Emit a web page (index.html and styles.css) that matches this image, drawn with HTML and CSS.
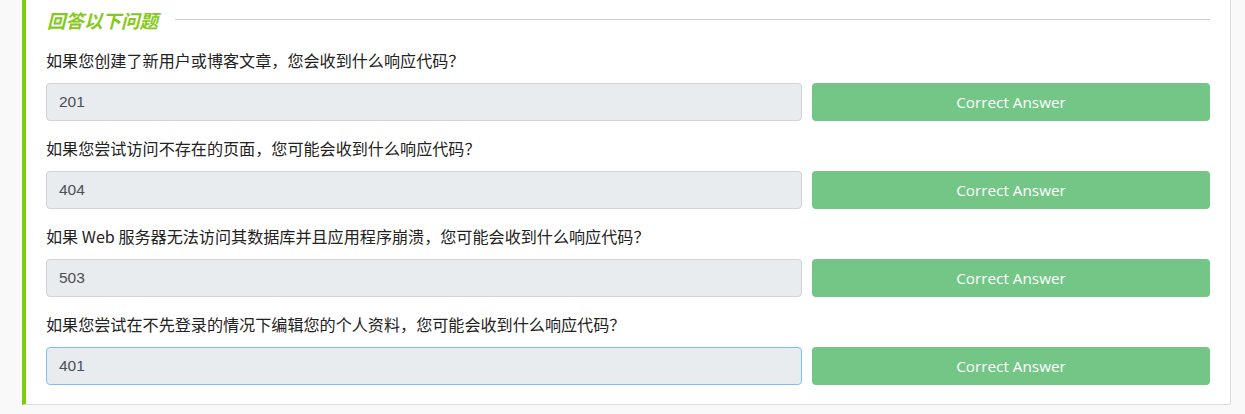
FILE: index.html
```html
<!DOCTYPE html>
<html lang="zh">
<head>
<meta charset="utf-8">
<link rel="stylesheet" href="styles.css">
</head>
<body>
<div class="card">
  <div class="heading">
    <span class="heading-title">回答以下问题</span>
    <span class="heading-rule"></span>
  </div>
  <div class="question">
    <div class="label">如果您创建了新用户或博客文章，您会收到什么响应代码？</div>
    <div class="row">
      <input class="answer" type="text" value="201" readonly>
      <button class="btn">Correct Answer</button>
    </div>
  </div>
  <div class="question">
    <div class="label">如果您尝试访问不存在的页面，您可能会收到什么响应代码？</div>
    <div class="row">
      <input class="answer" type="text" value="404" readonly>
      <button class="btn">Correct Answer</button>
    </div>
  </div>
  <div class="question">
    <div class="label">如果 Web 服务器无法访问其数据库并且应用程序崩溃，您可能会收到什么响应代码？</div>
    <div class="row">
      <input class="answer" type="text" value="503" readonly>
      <button class="btn">Correct Answer</button>
    </div>
  </div>
  <div class="question">
    <div class="label">如果您尝试在不先登录的情况下编辑您的个人资料，您可能会收到什么响应代码？</div>
    <div class="row">
      <input class="answer focused" type="text" value="401" readonly>
      <button class="btn">Correct Answer</button>
    </div>
  </div>
</div>
</body>
</html>
```
FILE: styles.css
```css
html, body {
  margin: 0;
  padding: 0;
  background: #f9f9f9;
  font-family: "Noto Sans CJK SC", "Noto Sans", sans-serif;
}

.card {
  box-sizing: border-box;
  margin-left: 22px;
  width: 1209px;
  background: #fff;
  border: 1px solid #dcdcdc;
  border-top: none;
  border-left: 4px solid #7fcb0d;
  border-bottom-right-radius: 3px;
  padding: 0 20px 19px 20px;
}

.heading {
  height: 38px;
  display: flex;
  align-items: center;
  gap: 17px;
}

.heading-title {
  font-size: 18.5px;
  font-style: italic;
  font-weight: 600;
  color: #86c91c;
  line-height: 20px;
  margin-top: 1px;
  margin-left: 1px;
}

.heading-rule {
  flex: 1;
  height: 1px;
  background: #cfcfcf;
}

.question {
  margin-top: 12px;
}

.question + .question {
  margin-top: 17px;
}

.label {
  font-size: 16.1px;
  line-height: 20px;
  color: #222;
  margin-bottom: 13px;
  white-space: nowrap;
}

.row {
  display: grid;
  grid-template-columns: 1fr 398px;
  gap: 10px;
  height: 38px;
}

.answer {
  box-sizing: border-box;
  height: 38px;
  margin: 0;
  padding: 0 12px;
  border: 1px solid #ced4da;
  border-radius: 4px;
  background: #e9ecef;
  color: #495057;
  font-family: "Liberation Sans", Arial, sans-serif;
  font-size: 15.5px;
  outline: none;
}

.answer.focused {
  border-color: #80bdff;
}

.btn {
  height: 38px;
  margin: 0;
  border: none;
  border-radius: 4px;
  background: #74c687;
  color: #fff;
  font-family: "Open Sans", sans-serif;
  font-size: 15.3px;
  font-weight: 500;
  cursor: pointer;
}
```
